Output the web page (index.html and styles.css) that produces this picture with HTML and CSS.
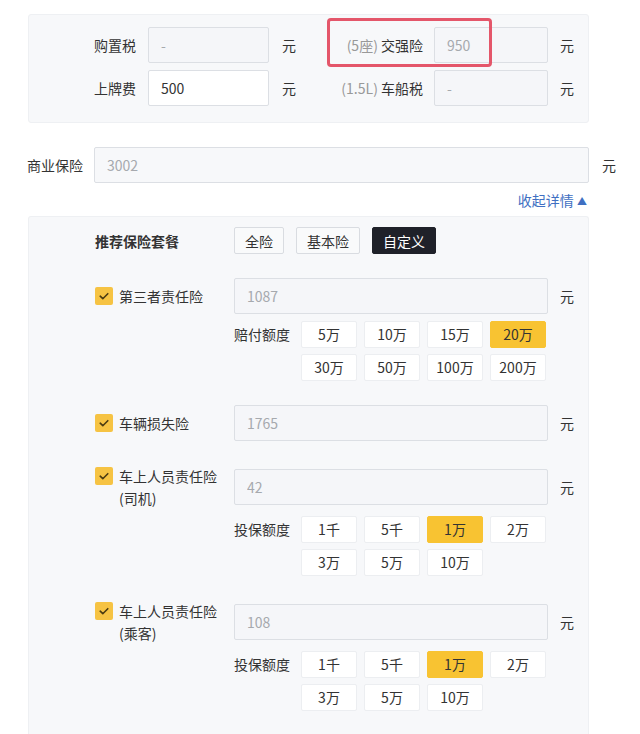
FILE: index.html
```html
<!DOCTYPE html>
<html lang="zh-CN">
<head>
    <meta charset="UTF-8">
    <meta name="viewport" content="width=device-width, initial-scale=1.0">
    <title>保险费用</title>
    <link rel="stylesheet" href="styles.css">
</head>
<body>
    <div class="page">
        <!-- 税费 -->
        <div class="fee-panel">
            <div class="fee-row">
                <div class="fee-cell">
                    <span class="fee-label">购置税</span>
                    <input class="field fee-input" value="-" disabled>
                    <span class="unit">元</span>
                </div>
                <div class="fee-cell right">
                    <span class="fee-label"><span class="hint">(5座)</span> 交强险</span>
                    <input class="field fee-input" value="950" disabled>
                    <span class="unit">元</span>
                    <span class="highlight"></span>
                </div>
            </div>
            <div class="fee-row">
                <div class="fee-cell">
                    <span class="fee-label">上牌费</span>
                    <input class="field fee-input active" value="500">
                    <span class="unit">元</span>
                </div>
                <div class="fee-cell right">
                    <span class="fee-label"><span class="hint">(1.5L)</span> 车船税</span>
                    <input class="field fee-input" value="-" disabled>
                    <span class="unit">元</span>
                </div>
            </div>
        </div>

        <!-- 商业保险 -->
        <div class="biz-row">
            <span class="biz-label">商业保险</span>
            <input class="field biz-input" value="3002" disabled>
            <span class="unit">元</span>
        </div>
        <div class="collapse-link">收起详情 <span class="arrow">▲</span></div>

        <div class="ins-panel">
            <div class="plan-row">
                <span class="plan-label">推荐保险套餐</span>
                <button class="plan-btn">全险</button>
                <button class="plan-btn">基本险</button>
                <button class="plan-btn selected">自定义</button>
            </div>

            <div class="ins-item">
                <div class="ins-head">
                    <div class="ins-name">
                        <span class="check"><svg width="18" height="18" viewBox="0 0 18 18"><path d="M5.2 9.2l2.6 2.5 5-5" fill="none" stroke="#4b3b12" stroke-width="1.6" stroke-linecap="round" stroke-linejoin="round"/></svg></span>
                        <span class="ins-text">第三者责任险</span>
                    </div>
                    <input class="field ins-input" value="1087" disabled>
                    <span class="unit">元</span>
                </div>
                <div class="ins-options">
                    <span class="opt-label">赔付额度</span>
                    <div class="opt-grid">
                        <span class="opt">5万</span>
                        <span class="opt">10万</span>
                        <span class="opt">15万</span>
                        <span class="opt selected">20万</span>
                        <span class="opt">30万</span>
                        <span class="opt">50万</span>
                        <span class="opt">100万</span>
                        <span class="opt">200万</span>
                    </div>
                </div>
            </div>

            <div class="ins-item">
                <div class="ins-head">
                    <div class="ins-name">
                        <span class="check"><svg width="18" height="18" viewBox="0 0 18 18"><path d="M5.2 9.2l2.6 2.5 5-5" fill="none" stroke="#4b3b12" stroke-width="1.6" stroke-linecap="round" stroke-linejoin="round"/></svg></span>
                        <span class="ins-text">车辆损失险</span>
                    </div>
                    <input class="field ins-input" value="1765" disabled>
                    <span class="unit">元</span>
                </div>
            </div>

            <div class="ins-item">
                <div class="ins-head">
                    <div class="ins-name">
                        <span class="check"><svg width="18" height="18" viewBox="0 0 18 18"><path d="M5.2 9.2l2.6 2.5 5-5" fill="none" stroke="#4b3b12" stroke-width="1.6" stroke-linecap="round" stroke-linejoin="round"/></svg></span>
                        <span class="ins-text">车上人员责任险<br>(司机)</span>
                    </div>
                    <input class="field ins-input" value="42" disabled>
                    <span class="unit">元</span>
                </div>
                <div class="ins-options">
                    <span class="opt-label">投保额度</span>
                    <div class="opt-grid">
                        <span class="opt">1千</span>
                        <span class="opt">5千</span>
                        <span class="opt selected">1万</span>
                        <span class="opt">2万</span>
                        <span class="opt">3万</span>
                        <span class="opt">5万</span>
                        <span class="opt">10万</span>
                    </div>
                </div>
            </div>

            <div class="ins-item">
                <div class="ins-head">
                    <div class="ins-name">
                        <span class="check"><svg width="18" height="18" viewBox="0 0 18 18"><path d="M5.2 9.2l2.6 2.5 5-5" fill="none" stroke="#4b3b12" stroke-width="1.6" stroke-linecap="round" stroke-linejoin="round"/></svg></span>
                        <span class="ins-text">车上人员责任险<br>(乘客)</span>
                    </div>
                    <input class="field ins-input" value="108" disabled>
                    <span class="unit">元</span>
                </div>
                <div class="ins-options">
                    <span class="opt-label">投保额度</span>
                    <div class="opt-grid">
                        <span class="opt">1千</span>
                        <span class="opt">5千</span>
                        <span class="opt selected">1万</span>
                        <span class="opt">2万</span>
                        <span class="opt">3万</span>
                        <span class="opt">5万</span>
                        <span class="opt">10万</span>
                    </div>
                </div>
            </div>
        </div>
    </div>
</body>
</html>
```

FILE: styles.css
```css
* {
    margin: 0;
    padding: 0;
    box-sizing: border-box;
}

body {
    font-family: "Noto Sans CJK SC", "Noto Sans", sans-serif;
    font-size: 14px;
    color: #333;
    background: #fff;
}

.page {
    padding: 14px 0 0 28px;
    width: 640px;
}

/* shared */
.field {
    flex-shrink: 0;
    height: 36px;
    padding: 0 12px;
    border: 1px solid #dcdfe4;
    border-radius: 2px;
    background: #f5f6f9;
    color: #a6a9ae;
    font-family: inherit;
    font-size: 14px;
    outline: none;
}

.field.active {
    background: #fff;
    color: #333;
}

.unit {
    flex-shrink: 0;
    width: 14px;
    line-height: 20px;
    color: #333;
}

/* 税费 */
.fee-panel {
    width: 561px;
    background: #f7f8fa;
    border: 1px solid #eef0f3;
    border-radius: 3px;
    padding: 12px 0 16px;
    display: flex;
    flex-direction: column;
    gap: 7px;
}

.fee-row {
    display: flex;
}

.fee-cell {
    display: flex;
    align-items: center;
    position: relative;
}

.fee-label {
    flex-shrink: 0;
    width: 107px;
    margin-right: 12px;
    text-align: right;
    line-height: 20px;
    white-space: nowrap;
}

.fee-input {
    width: 121px;
}

.fee-cell .unit {
    margin-left: 13px;
}

.fee-cell.right .fee-label {
    width: 127px;
    margin-right: 11px;
}

.fee-cell.right .fee-input {
    width: 114px;
}

.fee-cell.right .unit {
    margin-left: 12px;
}

.hint {
    color: #999;
}

.highlight {
    position: absolute;
    left: 31px;
    top: -9px;
    width: 165px;
    height: 49px;
    border: 3px solid #e4566a;
    border-radius: 4px;
}

/* 商业保险 */
.biz-row {
    display: flex;
    align-items: center;
    margin-top: 24px;
}

.biz-label {
    flex-shrink: 0;
    width: 56px;
    margin-left: -1px;
    margin-right: 11px;
    line-height: 20px;
    white-space: nowrap;
}

.biz-input {
    width: 495px;
    background: #f7f8fa;
}

.biz-row .unit {
    margin-left: 13px;
}

.collapse-link {
    margin-top: 7px;
    width: 561px;
    text-align: right;
    line-height: 20px;
    color: #3f6fc2;
    padding-right: 2px;
}

.arrow {
    font-size: 10px;
    vertical-align: 1px;
}

/* 险种 */
.ins-panel {
    margin-top: 5px;
    width: 561px;
    min-height: 520px;
    background: #f7f8fa;
    border: 1px solid #eef0f3;
    border-bottom: none;
    border-radius: 3px 3px 0 0;
    padding: 10px 0 0 66px;
    display: flex;
    flex-direction: column;
    gap: 24px;
}

.plan-row {
    display: flex;
    align-items: center;
}

.plan-label {
    width: 139px;
    font-weight: bold;
    line-height: 20px;
}

.plan-btn {
    height: 27px;
    padding: 0 10px;
    margin-right: 12px;
    border: 1px solid #d9dce1;
    border-radius: 2px;
    background: #f9fafb;
    color: #333;
    font-family: inherit;
    font-size: 14px;
}

.plan-btn.selected {
    background: #1f2129;
    border-color: #1f2129;
    color: #fff;
}

.ins-head {
    display: flex;
    align-items: center;
}

.ins-name {
    flex-shrink: 0;
    width: 139px;
    display: flex;
    align-items: flex-start;
}

.check {
    flex-shrink: 0;
    width: 18px;
    height: 18px;
    margin-top: 2px;
    margin-right: 6px;
    background: #f6c343;
    border-radius: 2px;
    display: flex;
}

.ins-text {
    line-height: 22px;
}

.ins-input {
    width: 314px;
}

.ins-head .unit {
    margin-left: 12px;
}

.ins-options {
    display: flex;
    margin-top: 7px;
    margin-left: 139px;
}

.opt-label {
    width: 67px;
    line-height: 27px;
}

.opt-grid {
    display: grid;
    grid-template-columns: repeat(4, 56px);
    gap: 6px 7px;
}

.opt {
    height: 27px;
    line-height: 25px;
    text-align: center;
    background: #fff;
    border: 1px solid #eceef1;
    border-radius: 2px;
    color: #333;
}

.opt.selected {
    background: #f8c332;
    border-color: #f8c332;
}
```
